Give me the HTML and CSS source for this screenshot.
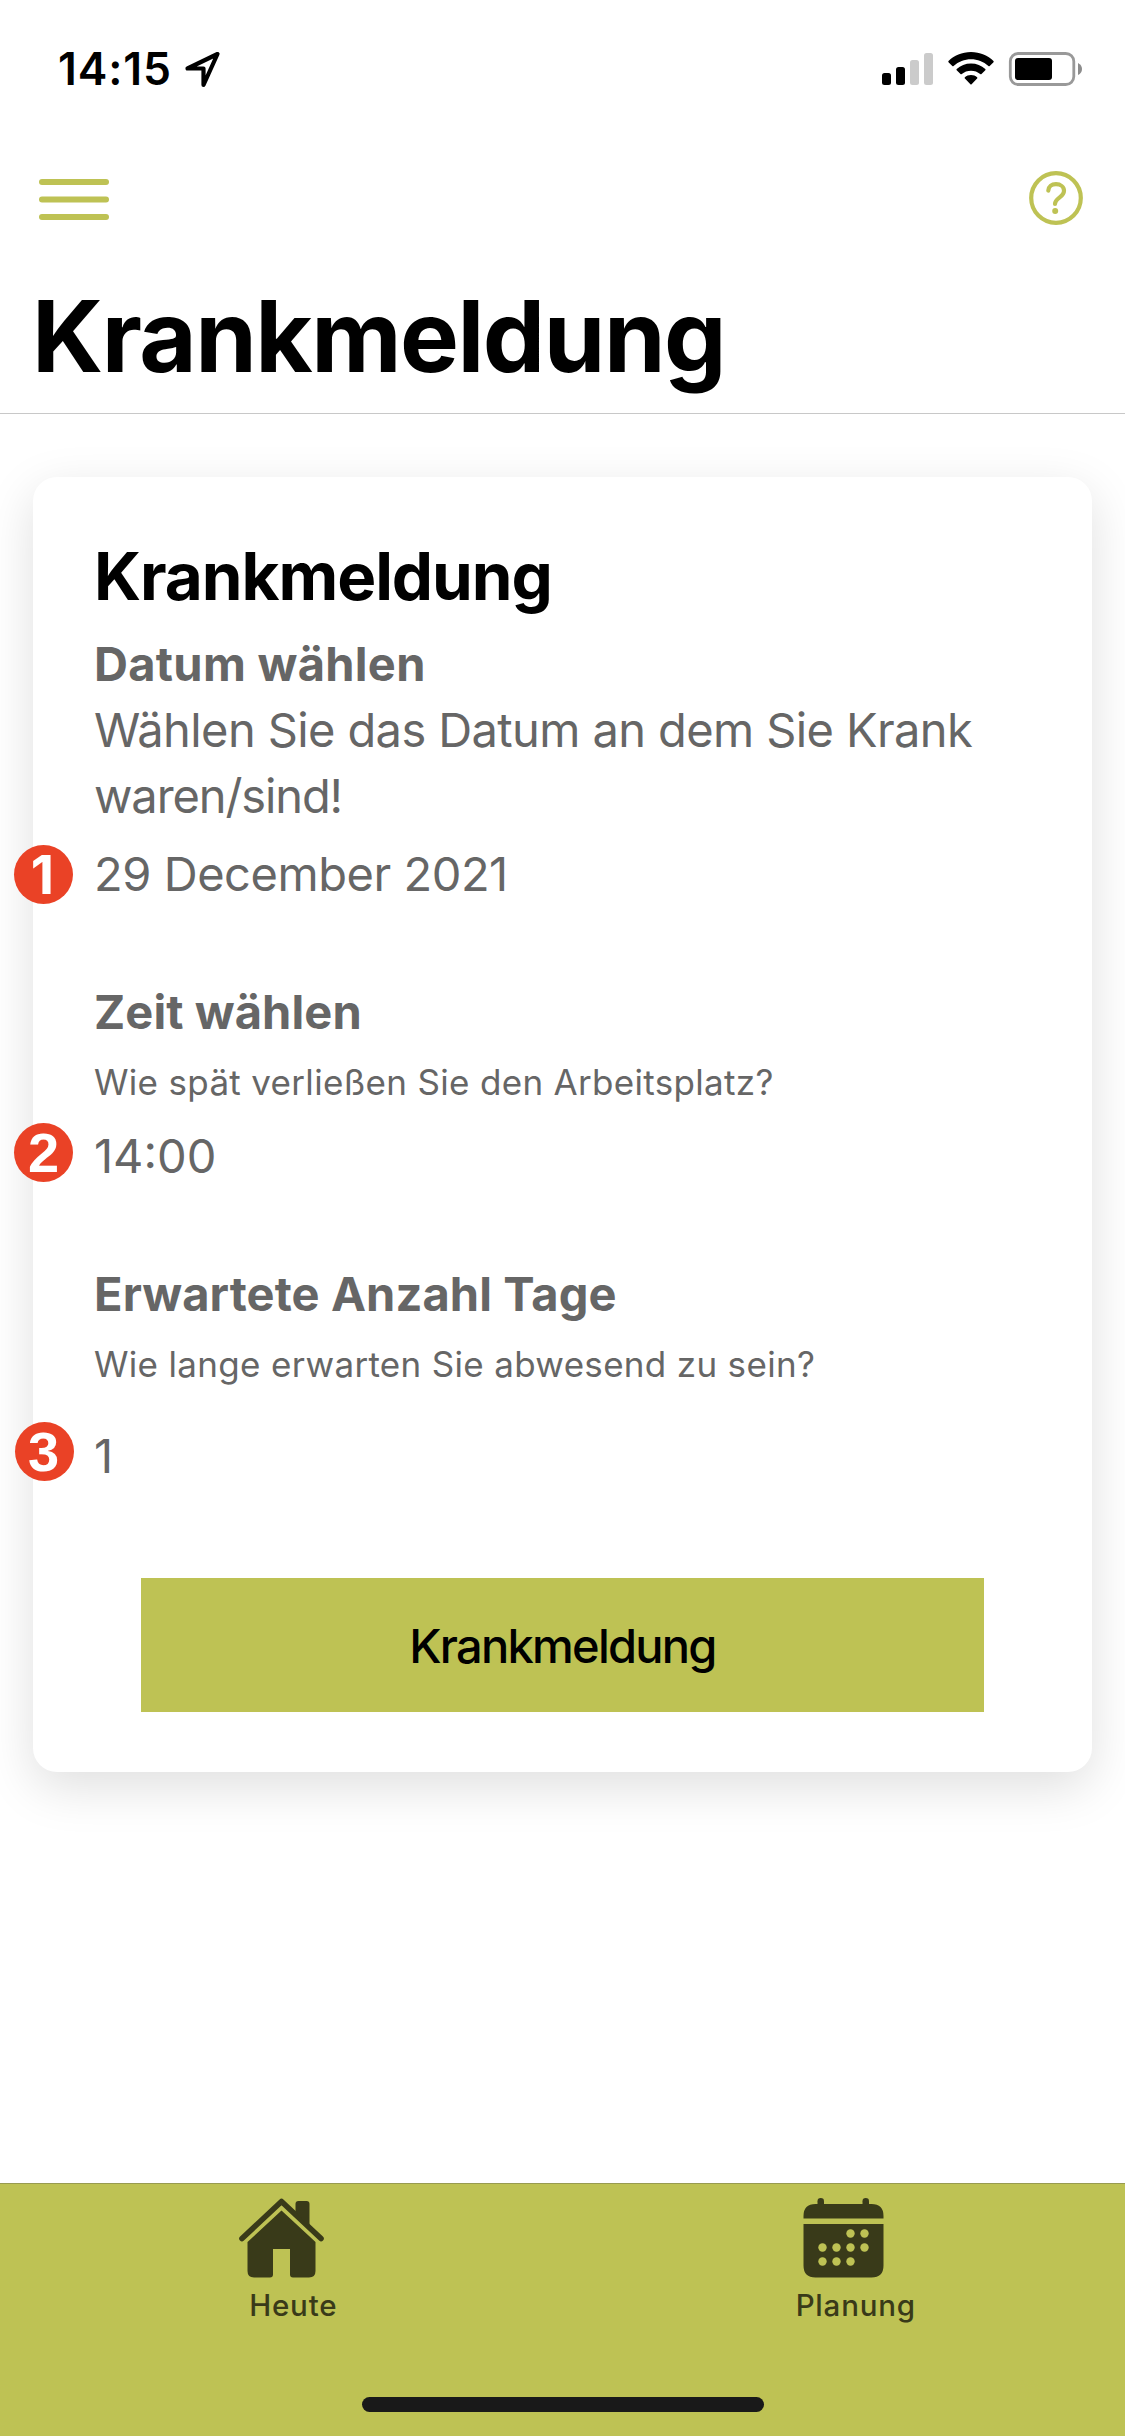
FILE: index.html
```
<!DOCTYPE html>
<html lang="de">
<head>
<meta charset="utf-8">
<title>Krankmeldung</title>
<link rel="stylesheet" href="styles.css">
</head>
<body>
<div class="screen">
  <header class="status">
    <span class="clock">14:15</span>
    <svg class="location" width="38" height="40" viewBox="0 0 38 40"><path d="M34.500 4 L4.500 18.500 H20.500 V35 Z" fill="none" stroke="#000" stroke-width="4.200" stroke-linejoin="round"/></svg>
    <svg class="indicators" width="202" height="38" viewBox="880 50 202 38">
      <rect x="882" y="73" width="9" height="12" rx="2.500"/><rect x="896" y="67" width="9" height="18" rx="2.500"/>
      <g fill="#cbcbcb"><rect x="910" y="60" width="9" height="25" rx="2.500"/><rect x="924" y="53" width="9" height="32" rx="2.500"/></g>
      <path d="M971 52 C980 52 988 55.500 993.500 61 Q994 61.700 993.500 62.300 L989.700 66 Q989 66.500 988.400 66 C983.500 61.700 977.500 59.300 971 59.300 S958.500 61.700 953.600 66 Q953 66.500 952.300 66 L948.500 62.300 Q948 61.700 948.500 61 C954 55.500 962 52 971 52 Z M971 63.500 C976.500 63.500 981.500 65.500 985.300 69 Q985.900 69.700 985.300 70.300 L981.500 74 Q980.900 74.500 980.200 74 C977.700 71.900 974.500 70.700 971 70.700 S964.300 71.900 961.800 74 Q961.100 74.500 960.500 74 L956.700 70.300 Q956.100 69.700 956.700 69 C960.500 65.500 965.500 63.500 971 63.500 Z M971 75 C973.500 75 975.500 75.800 977.100 77.200 Q977.800 77.900 977.100 78.600 L971.600 84.300 Q971 84.900 970.400 84.300 L964.900 78.600 Q964.200 77.900 964.900 77.200 C966.500 75.800 968.500 75 971 75 Z"/>
      <rect x="1010.300" y="53.500" width="63.500" height="31" rx="8" fill="#fff" stroke="#999" stroke-width="2.800"/>
      <rect x="1015" y="58" width="37" height="22" rx="3"/>
      <path d="M1078 63 Q1082 65 1082 69 T1078 75 Z" fill="#8c8c8c"/>
    </svg>
  </header>
  <div class="toolbar">
    <svg class="menu" width="70" height="41" viewBox="0 0 70 41" fill="#bec254"><rect width="70" height="6" y="0" rx="3"/><rect width="70" height="6" y="17.500" rx="3"/><rect width="70" height="6" y="35" rx="3"/></svg>
    <svg class="help" width="54" height="54" viewBox="0 0 54 54" fill="none" stroke="#bec254" stroke-width="4.200" stroke-linecap="round"><circle cx="27" cy="27" r="24.800"/><path d="M19.300 19.600 C19.500 15.500 22.500 13.200 27 13.200 C31.500 13.200 35 15.900 35 19.700 C35 26.500 26 26.700 26 33"/><circle cx="26.200" cy="39.900" r="3" fill="#bec254" stroke="none"/></svg>
  </div>
  <h1 class="page-title">Krankmeldung</h1>
  <main class="card">
    <h2 class="card-title">Krankmeldung</h2>
    <h3 class="label label-date">Datum wählen</h3>
    <p class="text desc">Wählen Sie das Datum an dem Sie Krank<br><span class="desc-end">waren/sind!</span></p>
    <div class="text value value-date"><span class="badge badge-date badge-one">1</span>29 December 2021</div>
    <h3 class="label label-time">Zeit wählen</h3>
    <p class="hint">Wie spät verließen Sie den Arbeitsplatz?</p>
    <div class="text value value-time"><span class="badge">2</span>14:00</div>
    <h3 class="label label-days">Erwartete Anzahl Tage</h3>
    <p class="hint">Wie lange erwarten Sie abwesend zu sein?</p>
    <div class="text value value-days"><span class="badge badge-days">3</span>1</div>
    <button class="submit">Krankmeldung</button>
  </main>
  <nav class="tabs">
    <a class="tab">
      <svg class="tab-icon" width="88" height="82" viewBox="-1 0 88 82" fill="#393a19"><path d="M4 40.500 L43.500 3.500 L83 40.500" fill="none" stroke="#393a19" stroke-width="5.600" stroke-linecap="round" stroke-linejoin="round"/><path d="M57.500 14 V6 Q57.500 3 60.500 3 H68.500 Q71.500 3 71.500 6 V29 Z"/><path d="M43.500 12.500 L77.500 44 V73 Q77.500 79.500 71 79.500 H55 Q52 79.500 52 76.500 V51 H35 V76.500 Q35 79.500 32 79.500 H16 Q9.500 79.500 9.500 73 V44 Z"/></svg>
      <span class="tab-label">Heute</span>
    </a>
    <a class="tab">
      <svg class="tab-icon" width="86" height="82" viewBox="0.500 0 86 82" fill="#393a19"><rect x="17" y="0" width="6.500" height="12" rx="3.200"/><rect x="62" y="0" width="6.500" height="12" rx="3.200"/><path d="M3 20.500 V18 Q3 6 15 6 H71 Q83 6 83 18 V20.500 Z M3 26 H83 V67.500 Q83 79.500 71 79.500 H15 Q3 79.500 3 67.500 Z"/><g fill="#bec254"><circle cx="50" cy="35.500" r="4.200"/><circle cx="64" cy="35.500" r="4.200"/><circle cx="22" cy="49.500" r="4.200"/><circle cx="36" cy="49.500" r="4.200"/><circle cx="50" cy="49.500" r="4.200"/><circle cx="64" cy="49.500" r="4.200"/><circle cx="22" cy="63.500" r="4.200"/><circle cx="36" cy="63.500" r="4.200"/><circle cx="50" cy="63.500" r="4.200"/></g></svg>
      <span class="tab-label">Planung</span>
    </a>
    <div class="home-bar"></div>
  </nav>
</div>
</body>
</html>
```
FILE: styles.css
```
* { box-sizing: border-box; margin: 0; padding: 0; }
body { background: #fff; font-family: Inter, "Liberation Sans", sans-serif; color: #000; }
.screen { width: 1125px; height: 2436px; display: flex; flex-direction: column; overflow: hidden; }

.status { height: 132px; padding: 43px 42px 0 58px; display: flex; align-items: flex-start; }
.clock { width: 125px; font-size: 44.500px; line-height: 52px; font-weight: 600; letter-spacing: .9px; }
.location { margin-top: 7px; }
.indicators { margin: 7px 1px 0 auto; }

.toolbar { height: 144px; padding: 39px 42px 0 39px; display: flex; justify-content: space-between; align-items: flex-start; }
.menu { margin-top: 8px; }

.page-title { height: 138px; padding-left: 32px; font-size: 99px; line-height: 120px; font-weight: 700; letter-spacing: -1.5px; border-bottom: 1px solid #c8c8c8; white-space: nowrap; }

.card { margin: 63px 33px 0; height: 1295px; padding: 60px 61px; display: flex; flex-direction: column; border-radius: 24px; background: #fff; box-shadow: 0 15px 50px rgba(0, 0, 0, .13); white-space: nowrap; }
.card-title { font-size: 65.500px; line-height: 80px; font-weight: 700; letter-spacing: -1.05px; }
.label { font-size: 47px; line-height: 66px; font-weight: 700; letter-spacing: .1px; color: #666; }
.text { font-size: 47px; line-height: 66px; letter-spacing: -.45px; color: #666; }
.hint { font-size: 35px; line-height: 48px; letter-spacing: .32px; color: #666; margin-top: 13px; }
.desc { letter-spacing: -.6px; }
.desc-end { letter-spacing: -1.1px; }
.value { position: relative; }
.label-date { margin-top: 14px; letter-spacing: .3px; }
.value-date { margin-top: 12px; }
.label-time, .label-days { margin-top: 72px; }
.value-time { margin-top: 17px; letter-spacing: 0; }
.value-days { margin-top: 35px; }
.badge { position: absolute; left: -80px; top: 0; width: 59px; height: 59px; border-radius: 50%; background: #ea4226; color: #fff; font: 700 56px/59px "Liberation Sans", Arial, sans-serif; letter-spacing: 0; text-align: center; }
.badge-date { top: 3.500px; }
.badge-days { left: -79px; top: -.7px; padding-right: 2px; }
.badge-one { font: 700 54px/59px Inter, sans-serif; padding-right: 2px; }
.submit { margin: 89px 47px 0; padding-top: 2px; height: 134px; border: 0; background: #bec254; color: #000; font: 500 47px/66px Inter, "Liberation Sans", sans-serif; letter-spacing: -1.75px; }

.tabs { margin-top: auto; height: 253px; border-top: 1px solid #989b50; background: #bec254; display: grid; grid-template-columns: 1fr 1fr; grid-template-rows: 213px 15px; }
.tab { display: flex; flex-direction: column; align-items: center; padding-top: 14px; color: #393a19; }
.tab-label { font-size: 29.500px; line-height: 40px; margin-top: 5px; margin-left: 24px; font-weight: 500; letter-spacing: .8px; }
.home-bar { grid-column: 1 / -1; justify-self: center; width: 402px; height: 15px; border-radius: 8px; background: #191919; }
```
